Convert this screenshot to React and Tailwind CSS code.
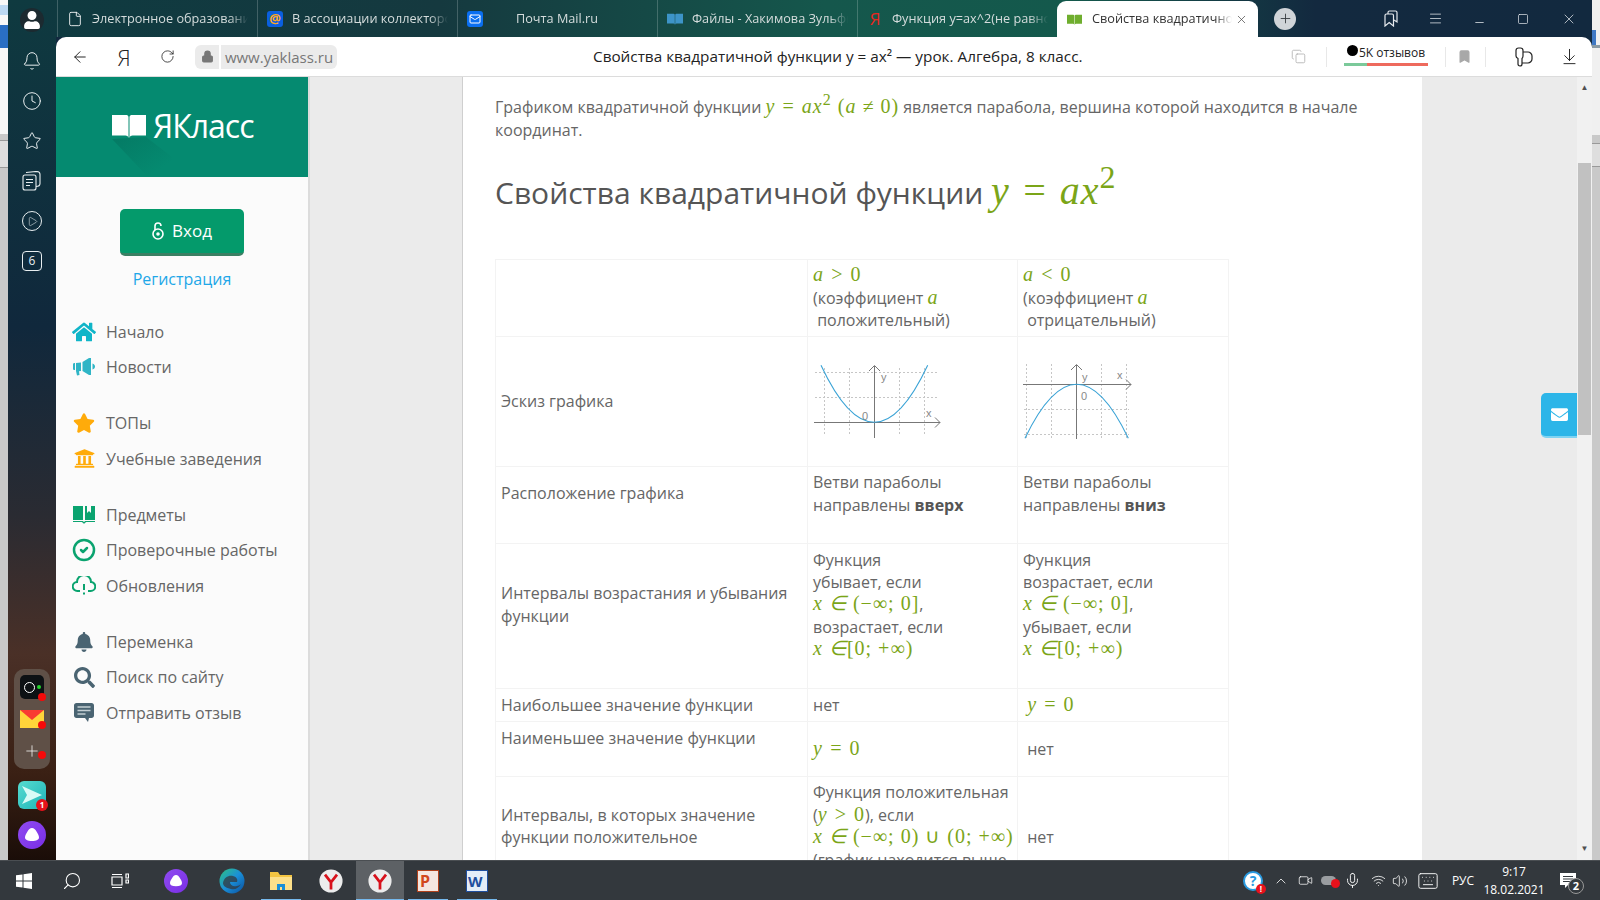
import {
  ArrowLeft, ArrowDownToLine, Bell, ChevronUp, CircleCheck, Clock, File, Mail, Menu, Mic, Minus, Plus, RotateCw,
  Search, Square, Star, Volume2, Wifi, X, Lock, Bookmark, Copy, Video, Keyboard, Play,
} from 'lucide-react';
import { FaHome, FaStar, FaUniversity, FaBell, FaSearch, FaEnvelope, FaUser } from 'react-icons/fa';

const openSans = { fontFamily: '"Open Sans", sans-serif' };

// math pieces
function M({ children, className = 'text-[20px]' }) {
  return <span className={`font-['Liberation_Serif',serif] italic text-[#7ba518] tracking-[1px] leading-none ${className}`}>{children}</span>;
}
function R({ children }) {
  return <span className="not-italic">{children}</span>;
}

function BookLogo({ className, color = '#fff' }) {
  return (
    <svg className={className} viewBox="0 0 34 24" fill={color}>
      <path d="M0 1h14c1.3 0 2.3.6 2.5 2v21c-.5-1.6-1.6-2.400-3-2.400H0z" />
      <path d="M34 1H20c-1.3 0-2.3.6-2.500 2v21c.5-1.6 1.600-2.400 3-2.400H34z" />
    </svg>
  );
}

function Tab({ icon, title, center }) {
  return (
    <div className="w-[200px] h-[37px] flex items-center border-l border-white/20 relative">
      <div className="w-[34px] flex justify-center shrink-0">{icon}</div>
      <div className={`w-[156px] whitespace-nowrap overflow-hidden text-[12.7px] text-[#d4dcdc] [mask-image:linear-gradient(to_right,black_88%,transparent)] ${center ? 'pl-[24px]' : ''}`}>
        {title}
      </div>
    </div>
  );
}

function NavRow({ icon, label }) {
  return (
    <div className="h-[35.5px] flex items-center text-[16px] text-[#666]">
      <div className="w-[50px] flex justify-center pl-[6px] shrink-0">{icon}</div>
      <span>{label}</span>
    </div>
  );
}

function Parabola({ up }) {
  const grid = 'stroke-[#c6c6c6]';
  if (up) {
    return (
      <svg width="130" height="76" className="block">
        <g className={grid} strokeWidth="1" strokeDasharray="2 2">
          <path d="M11.5 5V73M36.5 5V73M86.5 5V73M111.5 5V73M2 9.5H126M2 34.5H126" />
        </g>
        <path d="M1 59.5H127M122 54.5l5 5-5 5M61.5 75V3M56 8l5.500-5.500L67 8" fill="none" stroke="#777" strokeWidth="1" />
        <path d="M8 2.3Q61.3 116.3 114.7 2.3" fill="none" stroke="#3aa3d6" strokeWidth="1.1" />
        <g fill="#888" fontSize="11" fontFamily="Liberation Sans, sans-serif">
          <text x="68" y="18">y</text>
          <text x="113" y="54">x</text>
          <text x="49" y="57">0</text>
        </g>
      </svg>
    );
  }
  return (
    <svg width="112" height="78" className="block">
      <g className={grid} strokeWidth="1" strokeDasharray="2 2">
        <path d="M3.5 2V76M28.5 2V76M78.5 2V76M103.5 2V76M1 47.5H106M1 72.5H106" />
      </g>
      <path d="M0 22.5H108M103 17.5l5 5-5 5M53.5 77V3M48 8l5.500-5.500L59 8" fill="none" stroke="#777" strokeWidth="1" />
      <path d="M2 76.3Q53.7 -31.7 105.3 76.3" fill="none" stroke="#3aa3d6" strokeWidth="1.1" />
      <g fill="#888" fontSize="11" fontFamily="Liberation Sans, sans-serif">
        <text x="59" y="19">y</text>
        <text x="94" y="17">x</text>
        <text x="58" y="38">0</text>
      </g>
    </svg>
  );
}

function YandexBall({ size = 28 }) {
  return (
    <svg width={size} height={size} viewBox="0 0 28 28">
      <circle cx="14" cy="14" r="13.5" fill="#ececec" />
      <path d="M7 6.500l7 9 7-9M14 15.500V24" fill="none" stroke="#d8111b" strokeWidth="3.2" />
    </svg>
  );
}

function Alice({ size = 28 }) {
  return (
    <svg width={size} height={size} viewBox="0 0 28 28">
      <defs>
        <linearGradient id={`al${size}`} x1="0" y1="0" x2="1" y2="1">
          <stop offset="0" stopColor="#8f4bf0" />
          <stop offset="1" stopColor="#7a2ee6" />
        </linearGradient>
      </defs>
      <circle cx="14" cy="14" r="14" fill={`url(#al${size})`} />
      <path d="M14 7c2 0 3.200 1.300 4.500 3.600 1.200 2 2.500 4 2.500 5.900 0 2.300-2.500 3.500-7 3.500s-7-1.200-7-3.500c0-1.900 1.300-3.900 2.500-5.900C10.800 8.300 12 7 14 7z" fill="#fff" />
    </svg>
  );
}

function TaskItem({ children, active, underline, className = '' }) {
  return (
    <div className={`w-[48px] h-[40px] flex items-center justify-center relative ${active ? 'bg-[#5d6165]' : ''} ${className}`}>
      {children}
      {underline && <div className="absolute bottom-0 left-[4px] right-[4px] h-[2px] bg-[#76b9ed]" />}
      {active && <div className="absolute bottom-0 left-0 right-0 h-[2px] bg-[#76b9ed]" />}
    </div>
  );
}

const cell = 'border border-[#f3f3f3] px-[5px] align-middle';

export default function App() {
  return (
    <div className="w-[1600px] h-[900px] flex flex-col overflow-hidden relative bg-[#33383d]" style={openSans}>
      <div className="flex h-[860px]">
        {/* bit of the windows behind */}
        <div className="w-[8px] bg-[#c9c9c9] flex flex-col shrink-0">
          <div className="h-[134px] bg-[#f7f7f7] flex flex-col">
            <div className="h-[5px]" />
            <div className="h-[10px] bg-[#bcd8f2]" />
            <div className="h-[10px]" />
            <div className="h-[23px] bg-[#2a6fc4]" />
          </div>
          <div className="h-[28px] mt-[6px] border-y border-[#999] bg-[#dedede]" />
        </div>

        {/* yandex side panel */}
        <div className="w-[48px] shrink-0 flex flex-col items-center bg-[linear-gradient(180deg,#0f3a40_0%,#10283c_38%,#2a2b32_60%,#4a3027_76%,#3a2014_90%,#1a0d08_100%)] text-white">
          <div className="w-[24px] h-[24px] mt-[8px] rounded-full bg-[#1c2a30] flex items-center justify-center overflow-hidden">
            <FaUser size={18} className="text-white" />
          </div>
          <div className="mt-[19px] flex flex-col items-center gap-[20px] text-[#e8eef0]">
            <Bell size={20} strokeWidth={1.2} />
            <Clock size={20} strokeWidth={1.2} />
            <Star size={20} strokeWidth={1.2} />
            <svg width="20" height="20" viewBox="0 0 20 20" fill="none" stroke="#e8eef0" strokeWidth="1.1">
              <rect x="1" y="4" width="13" height="15" rx="2" />
              <path d="M4 1.500l10-1c2 0 4 1 4 3v9c0 1.500-1 3-4 3M4 8.500h7M4 11.500h7M4 14.500h4" />
            </svg>
            <div className="w-[20px] h-[20px] rounded-full border border-[#e8eef0] flex items-center justify-center">
              <Play size={11} strokeWidth={1.2} className="ml-[1px]" />
            </div>
            <div className="w-[20px] h-[20px] rounded-[4px] border border-[#e8eef0] flex items-center justify-center text-[12px]">6</div>
          </div>
          <div className="mt-auto w-[36px] h-[100px] rounded-[10px] bg-[#5f5047] flex flex-col items-center pt-[6px] mb-[12px]">
            <div className="w-[24px] h-[24px] rounded-[5px] bg-[#0d1114] relative flex items-center justify-center">
              <div className="w-[11px] h-[11px] rounded-full border border-white -ml-[5px]" />
              <div className="absolute w-[4px] h-[4px] rounded-full bg-[#22d52a] right-[3px] top-[10px]" />
              <div className="absolute w-[8px] h-[8px] rounded-full bg-[#f50a0a] -right-[2px] -bottom-[2px]" />
            </div>
            <div className="w-[24px] h-[18px] mt-[11px] relative">
              <svg width="24" height="18" viewBox="0 0 24 18">
                <rect width="24" height="18" fill="#ffd43a" />
                <path d="M0 0h24L12 10z" fill="#f93a32" />
              </svg>
              <div className="absolute w-[8px] h-[8px] rounded-full bg-[#f50a0a] -right-[2px] -bottom-[1px]" />
            </div>
            <div className="relative mt-[14px]">
              <Plus size={18} strokeWidth={1} className="text-white" />
              <div className="absolute w-[8px] h-[8px] rounded-full bg-[#f50a0a] -right-[5px] top-[9px]" />
            </div>
          </div>
          <div className="w-[28px] h-[28px] rounded-[6px] bg-[linear-gradient(135deg,#56dcd0,#1fb4b8)] relative flex items-center justify-center mb-[12px]">
            <svg width="22" height="20" viewBox="0 0 22 20">
              <path d="M1 1l20 9-20 9 5-9z" fill="#d8fbf6" />
            </svg>
            <div className="absolute w-[12px] h-[12px] rounded-full bg-[#e8111b] -right-[2px] -bottom-[2px] text-white text-[8px] font-bold flex items-center justify-center">1</div>
          </div>
          <div className="mb-[11px]"><Alice /></div>
        </div>

        <div className="flex-1 flex flex-col bg-[#12293f] min-w-0">
          {/* tabs */}
          <div className="h-[37px] flex items-center bg-[linear-gradient(90deg,#0f3a40_0%,#15393f_25%,#15574c_50%,#14594c_66%,#13293f_82%,#12293f_100%)]">
            <div className="w-[1px]" />
            <Tab title="Электронное образование" icon={<File size={16} strokeWidth={1.3} className="text-white" />} />
            <Tab title="В ассоциации коллекторов" icon={<div className="w-[16px] h-[16px] rounded-[3px] bg-[#0a5fe0] text-[#ffa81e] text-[13px] font-bold leading-[15px] text-center">@</div>} />
            <Tab center title="Почта Mail.ru" icon={<div className="w-[16px] h-[16px] rounded-[3px] bg-[#0a6ff0] flex items-center justify-center"><Mail size={12} className="text-white" /></div>} />
            <Tab title="Файлы - Хакимова Зульфия" icon={<BookLogo className="w-[16px] h-[14px]" color="#3d94c8" />} />
            <Tab title="Функция y=ax^2(не равно" icon={<span className="text-[#e8271d] text-[17px] leading-none">Я</span>} />
            <div className="w-[201px] h-[36px] mt-[1px] bg-white rounded-t-[9px] flex items-center shrink-0">
              <div className="w-[35px] flex justify-center shrink-0"><BookLogo className="w-[15px] h-[13px]" color="#6fae2e" /></div>
              <div className="w-[140px] whitespace-nowrap overflow-hidden text-[12.7px] text-[#333] [mask-image:linear-gradient(to_right,black_88%,transparent)]">Свойства квадратичной</div>
              <X size={13} strokeWidth={1.3} className="text-[#444] ml-[3px]" />
            </div>
            <div className="w-[22px] h-[22px] rounded-full bg-[#d0d4d8] ml-[16px] flex items-center justify-center">
              <Plus size={15} strokeWidth={1.4} className="text-[#33383d]" />
            </div>
            <div className="flex-1" />
            <div className="flex items-center text-[#e6eaee]">
              <div className="w-[44px] flex justify-center">
                <svg width="14" height="17" viewBox="0 0 14 17" fill="none" stroke="#e6eaee" strokeWidth="1.2">
                  <path d="M1 5.500c0-1 .5-1.500 1.500-1.500H8c1 0 1.500.5 1.500 1.500V16L5.200 12.500 1 16z" />
                  <path d="M4 4V2.500C4 1.500 4.500 1 5.500 1H11.500C12.500 1 13 1.500 13 2.500V12l-3-2" />
                </svg>
              </div>
              <div className="w-[44px] flex justify-center"><Menu size={15} strokeWidth={1.2} /></div>
              <div className="w-[44px] flex justify-center pt-[7px]"><Minus size={13} strokeWidth={1.4} /></div>
              <div className="w-[44px] flex justify-center"><Square size={12} strokeWidth={1.4} /></div>
              <div className="w-[47px] flex justify-center"><X size={16} strokeWidth={1.1} /></div>
            </div>
          </div>

          {/* address bar */}
          <div className="h-[40px] bg-white rounded-t-[10px] border-b border-[#dcdcdc] flex items-center relative shrink-0">
            <div className="w-[48px] flex justify-center"><ArrowLeft size={18} strokeWidth={1.3} className="text-[#222]" /></div>
            <div className="w-[40px] flex justify-center text-[22px] leading-none text-[#222] font-light">Я</div>
            <div className="w-[46px] flex justify-center"><RotateCw size={15} strokeWidth={1.3} className="text-[#222]" /></div>
            <div className="w-[24px] h-[24px] ml-[5px] rounded-l-[6px] bg-[#ebebeb] flex items-center justify-center">
              <Lock size={13} className="text-[#777]" fill="#777" />
            </div>
            <div className="h-[24px] ml-[2px] w-[116px] rounded-r-[6px] bg-[#ebebeb] text-[15px] text-[#777] leading-[24px] text-center">www.yaklass.ru</div>
            <div className="ml-[256px] text-[15.3px] text-[#222] whitespace-nowrap">Свойства квадратичной функции y = ax² — урок. Алгебра, 8 класс.</div>
            <div className="ml-auto flex items-center h-[24px] text-[#a8a8a8]">
              <Copy size={15} strokeWidth={1.2} />
              <div className="w-[1px] h-[20px] bg-[#e8e8e8] ml-[20px]" />
              <div className="w-[84px] ml-[17px] flex flex-col items-center">
                <div className="text-[12px] leading-[16px] text-[#222] whitespace-nowrap flex items-start -mt-[2px]">
                  <span className="w-[11px] h-[11px] rounded-full bg-black inline-block mr-[1px]" />5K отзывов
                </div>
                <div className="flex w-full h-[3px] mt-[2px]">
                  <div className="w-[23px] bg-[#7bc99a]" />
                  <div className="flex-1 bg-[#ee6a5d]" />
                </div>
              </div>
              <div className="w-[1px] h-[20px] bg-[#e8e8e8] ml-[17px]" />
              <Bookmark size={15} fill="#a8a8a8" className="ml-[11px]" />
              <div className="w-[1px] h-[20px] bg-[#e8e8e8] ml-[13px]" />
              <svg width="18" height="20" viewBox="0 0 18 20" className="ml-[29px] mr-[13px]" fill="none" stroke="#222" strokeWidth="1.2">
                <path d="M1 3.500c0-1.500 1-2.500 2.500-2.500h2C7 1 8 2 8 3.500V9c0 1-.5 2-1 2.500V17c0 1-.6 2-2 2s-2-1-2-2v-5.500C2 11 1 10 1 9z" />
                <path d="M8 5h5c2 0 4 2 4 4v3c0 2-2 4-4 4H7" />
              </svg>
              <div className="w-[46px] flex justify-center"><ArrowDownToLine size={19} strokeWidth={1.2} className="text-[#222]" /></div>
            </div>
          </div>

          {/* page */}
          <div className="flex-1 flex min-h-0 bg-[#ebebeb]">
            {/* site menu */}
            <div className="w-[254px] shrink-0 bg-[#fbfbfb] border-r-2 border-[#dcdcdc] flex flex-col">
              <div className="h-[100px] bg-[#058a70] flex items-center relative overflow-hidden">
                <svg className="absolute left-[56px] top-[60px]" width="60" height="40" viewBox="0 0 60 40">
                  <defs>
                    <linearGradient id="logoShade" x1="0" y1="0" x2="1" y2="1">
                      <stop offset="0" stopColor="#047a64" />
                      <stop offset="0.8" stopColor="#058a70" />
                    </linearGradient>
                  </defs>
                  <path d="M0 2L36 40h24V20L34 0z" fill="url(#logoShade)" />
                </svg>
                <BookLogo className="w-[34px] h-[24px] ml-[56px] relative -mt-[2px]" />
                <span className="ml-[7px] text-[32px] text-white tracking-[-1px] relative -mt-[2px]">ЯКласс</span>
              </div>
              <button className="w-[124px] h-[47px] ml-[64px] mt-[32px] rounded-[5px] bg-[#049a6b] border-b-[3px] border-[#3b7f63] text-white text-[17px] flex items-center justify-center gap-[8px]">
                <svg width="12" height="20" viewBox="0 0 12 20" fill="none" stroke="#fff" strokeWidth="1.6">
                  <path d="M3 9V5a3 3 0 0 1 6 0" />
                  <circle cx="6" cy="13" r="5" />
                  <circle cx="6" cy="13" r="1" fill="#fff" />
                </svg>
                Вход
              </button>
              <div className="mt-[11px] h-[24px] leading-[24px] text-center text-[16px] text-[#1ea7e8]">Регистрация</div>

              <div className="mt-[23px]">
                <NavRow label="Начало" icon={<FaHome size={24} className="text-[#10b5c8]" />} />
                <NavRow label="Новости" icon={
                  <svg width="22" height="18" viewBox="0 0 22 18" fill="#2fb5c6">
                    <path d="M0 6.500c0-1 .5-1.500 1.500-1.500H2v7h-.5C.5 12 0 11.500 0 10.500zM3 5l5-.5V13l-2 .3L6.500 17l-2.500.5L3 13zM9.500 4L16 0h2v17h-2L9.500 13zM19.500 5.500c1.500.5 2.500 1.500 2.500 3s-1 2.500-2.500 3z" />
                  </svg>
                } />
              </div>
              <div className="mt-[20.5px]">
                <NavRow label="ТОПы" icon={<FaStar size={22} className="text-[#ffab0a]" />} />
                <NavRow label="Учебные заведения" icon={<FaUniversity size={21} className="text-[#ffab0a]" />} />
              </div>
              <div className="mt-[20.5px]">
                <NavRow label="Предметы" icon={
                  <svg width="22" height="18" viewBox="0 0 22 18" fill="#0aa36f">
                    <path d="M0 0h10v14H0zM12 0h2v7l2-2 2 2V0h4v14H12zM0 15h9c1 0 1.500.5 2 1 .5-.5 1-1 2-1h9v1h-8c-1 0-2 .5-3 2-1-1.500-2-2-3-2H0z" />
                  </svg>
                } />
                <NavRow label="Проверочные работы" icon={<CircleCheck size={24} strokeWidth={2.5} className="text-[#0aa36f]" />} />
                <NavRow label="Обновления" icon={
                  <svg width="24" height="20" viewBox="0 0 24 20" fill="none" stroke="#0aa36f" strokeWidth="2">
                    <path d="M8 15H5.500a4.500 4.500 0 0 1-.5-9 7 7 0 0 1 14 0 4.500 4.500 0 0 1-.5 9H16" />
                    <path d="M12 8v6M12 16.500v2" />
                  </svg>
                } />
              </div>
              <div className="mt-[20.5px]">
                <NavRow label="Переменка" icon={<FaBell size={20} className="text-[#4a6472]" />} />
                <NavRow label="Поиск по сайту" icon={<FaSearch size={21} className="text-[#4a6472]" />} />
                <NavRow label="Отправить отзыв" icon={
                  <svg width="20" height="19" viewBox="0 0 20 19">
                    <path d="M2.500 0h15C19 0 20 1 20 2.500v10c0 1.500-1 2.500-2.500 2.500H15l-1 4-3-4H2.500C1 15 0 14 0 12.500v-10C0 1 1 0 2.500 0z" fill="#4a6472" />
                    <path d="M3.500 4h13M3.500 7.500h13M3.500 11h8" stroke="#c4cfd4" strokeWidth="1.500" />
                  </svg>
                } />
              </div>
            </div>

            <div className="w-[152px] shrink-0" />

            {/* article */}
            <div className="w-[960px] shrink-0 bg-white border-l border-[#cfcfcf] overflow-hidden pl-[32px] text-[16px] leading-[22.4px] text-[#666]">
              <p className="mt-[19px] w-[880px] leading-[23.4px]">
                Графиком квадратичной функции <M>y = ax<sup className="not-italic text-[16px]">2</sup> <R>(</R>a ≠ <R>0)</R></M> является парабола, вершина которой находится в начале координат.
              </p>
              <h2 className="mt-[28px] h-[40px] text-[30px] leading-[40px] text-[#555] whitespace-nowrap">
                Свойства квадратичной функции <M className="text-[40px]">y = ax<sup className="not-italic text-[32px]">2</sup></M>
              </h2>
              <table className="mt-[48px] border-collapse table-fixed w-[734px]">
                <tbody>
                  <tr className="h-[77px]">
                    <td className={`${cell} w-[312px]`} />
                    <td className={`${cell} w-[210px]`}>
                      <M>a &gt; <R>0</R></M><br />(коэффициент <M>a</M><br />&nbsp;положительный)
                    </td>
                    <td className={cell}>
                      <M>a &lt; <R>0</R></M><br />(коэффициент <M>a</M><br />&nbsp;отрицательный)
                    </td>
                  </tr>
                  <tr className="h-[130px]">
                    <td className={cell}>Эскиз графика</td>
                    <td className={cell}><Parabola up /></td>
                    <td className={cell}><Parabola /></td>
                  </tr>
                  <tr className="h-[77px]">
                    <td className={cell}>Расположение графика<br /><br /></td>
                    <td className={cell}>Ветви параболы<br />направлены <b className="text-[#555]">вверх</b><br /><br /></td>
                    <td className={cell}>Ветви параболы<br />направлены <b className="text-[#555]">вниз</b><br /><br /></td>
                  </tr>
                  <tr className="h-[145px]">
                    <td className={cell}>Интервалы возрастания и убывания функции<br /><br /></td>
                    <td className={cell}>
                      Функция<br />убывает, если<br /><M>x ∈ <R>(−∞; 0]</R></M>,<br />возрастает, если<br /><M>x ∈<R>[0; +∞)</R></M><br /><br />
                    </td>
                    <td className={cell}>
                      Функция<br />возрастает, если<br /><M>x ∈ <R>(−∞; 0]</R></M>,<br />убывает, если<br /><M>x ∈<R>[0; +∞)</R></M><br /><br />
                    </td>
                  </tr>
                  <tr className="h-[33px]">
                    <td className={cell}>Наибольшее значение функции</td>
                    <td className={cell}>нет</td>
                    <td className={cell}>&nbsp;<M>y = <R>0</R></M></td>
                  </tr>
                  <tr className="h-[55px]">
                    <td className={`${cell} !align-top pt-[5px]`}>Наименьшее значение функции</td>
                    <td className={cell}><M>y = <R>0</R></M></td>
                    <td className={cell}>&nbsp;нет</td>
                  </tr>
                  <tr className="h-[122px]">
                    <td className={cell}>Интервалы, в которых значение функции положительное<br /><br /></td>
                    <td className={cell}>
                      Функция положительная<br />(<M>y &gt; <R>0</R></M>), если<br />
                      <span className="whitespace-nowrap"><M>x ∈ <R>(−∞; 0) ∪ (0; +∞)</R></M></span><br />
                      (график находится выше<br />оси <M>x</M>)
                    </td>
                    <td className={cell}>&nbsp;нет</td>
                  </tr>
                </tbody>
              </table>
            </div>

            <div className="flex-1 relative">
              {/* feedback button */}
              <div className="absolute right-0 top-[316px] w-[36px] h-[45px] bg-[#2cb5e8] rounded-l-[5px] border-b-2 border-[#7fd3f2] flex items-center justify-center">
                <FaEnvelope size={17} className="text-white" />
              </div>
            </div>

            {/* scrollbar */}
            <div className="w-[15px] shrink-0 bg-[#f1f1f1] flex flex-col items-center text-[#505050] text-[8px] leading-none">
              <div className="h-[16px] pt-[6px]">▲</div>
              <div className="w-[13px] h-[272px] mt-[70px] bg-[#c1c1c1]" />
              <div className="mt-auto h-[16px] pb-[5px]">▼</div>
            </div>
          </div>
        </div>

        <div className="w-[8px] bg-[#c9c9c9] shrink-0 flex flex-col">
          <div className="h-[135px] bg-[#f0f0f0] flex flex-col">
            <div className="h-[30px]" />
            <div className="h-[15px] bg-[#3f78c4] w-[4px]" />
            <div className="h-[3px] bg-[#8a9aa5]" />
          </div>
          <div className="h-[24px] mt-[8px] border-y border-[#999] bg-[#dedede]" />
        </div>
      </div>

      {/* windows taskbar */}
      <div className="h-[40px] flex items-center bg-[#33383d] text-white border-t border-[#4a4e52]">
        <TaskItem>
          <svg width="16" height="16" viewBox="0 0 16 16" fill="#fff">
            <path d="M0 2.300L6.500 1.400V7.500H0zM7.500 1.200L16 0V7.500H7.500zM0 8.500H6.500V14.600L0 13.700zM7.500 8.500H16V16L7.500 14.800z" />
          </svg>
        </TaskItem>
        <TaskItem><Search size={20} strokeWidth={1.3} className="-scale-x-100" /></TaskItem>
        <TaskItem>
          <svg width="18" height="16" viewBox="0 0 18 16" fill="none" stroke="#fff" strokeWidth="1.2">
            <path d="M1 4h10v8H1zM1 1.500h10M1 14.500h10M15 1v4h2.500V1zM15 7v3h2.500V7z" />
          </svg>
        </TaskItem>
        <TaskItem className="ml-[8px]"><Alice size={24} /></TaskItem>
        <TaskItem className="ml-[8px]">
          <svg width="26" height="26" viewBox="0 0 26 26">
            <defs>
              <linearGradient id="edge" x1="0" y1="0" x2="1" y2="1">
                <stop offset="0" stopColor="#2fc37f" />
                <stop offset="0.5" stopColor="#1a8fd8" />
                <stop offset="1" stopColor="#0b4f9e" />
              </linearGradient>
            </defs>
            <circle cx="13" cy="13" r="12.500" fill="url(#edge)" />
            <path d="M4 15c1-6 6-8 10-7 4 1 5 4 4 6h-7c0 3 3 5 7 4 1 0 3-1 4-2-2 4-6 6-10 5-5-1-8-3-8-6z" fill="#33383d" opacity="0.75" />
          </svg>
        </TaskItem>
        <TaskItem underline className="ml-[1px]">
          <svg width="22" height="20" viewBox="0 0 22 20">
            <path d="M0 1h8l2 3h12v15H0z" fill="#f4c542" />
            <path d="M0 6h22v13H0z" fill="#fde08a" />
            <path d="M7 13h8v6h-3v-3h-2v3H7z" fill="#1a8fd8" />
          </svg>
        </TaskItem>
        <TaskItem className="ml-[2px]"><YandexBall size={24} /></TaskItem>
        <TaskItem active className="ml-[1px]"><YandexBall size={24} /></TaskItem>
        <TaskItem underline>
          <div className="w-[22px] h-[22px] bg-[#f5e6df] border border-[#b0411c] text-[#d2471c] text-[16px] font-bold leading-[20px] pl-[2px]">P</div>
        </TaskItem>
        <TaskItem underline className="ml-[1px]">
          <div className="w-[22px] h-[22px] bg-[#e4edf8] border border-[#1f4e9e] text-[#1f4e9e] text-[15px] font-bold leading-[20px] pl-[1px]">W</div>
        </TaskItem>

        <div className="ml-auto flex items-center pr-[15px]">
          <div className="w-[28px] flex justify-center relative">
            <div className="w-[20px] h-[20px] rounded-full bg-white border-2 border-[#2a9ae0] text-[#2a9ae0] text-[14px] font-bold leading-[16px] text-center">?</div>
            <div className="absolute right-[1px] bottom-[-3px] w-[10px] h-[10px] rounded-full bg-[#e8111b] text-[8px] font-bold leading-[10px] text-center">!</div>
          </div>
          <div className="w-[28px] flex justify-center"><ChevronUp size={16} strokeWidth={1.2} /></div>
          <div className="w-[20px] flex justify-center"><Video size={15} strokeWidth={1.2} /></div>
          <div className="w-[26px] flex justify-center relative">
            <div className="w-[15px] h-[9px] rounded-full bg-[#9a9da0]" />
            <div className="absolute right-[1px] -bottom-[3px] w-[9px] h-[9px] rounded-full bg-[#e8111b]" />
          </div>
          <div className="w-[22px] flex justify-center"><Mic size={17} strokeWidth={1.3} /></div>
          <div className="w-[30px] flex justify-center"><Wifi size={15} strokeWidth={1.3} /></div>
          <div className="w-[14px] flex justify-center"><Volume2 size={16} strokeWidth={1.2} className="shrink-0" /></div>
          <div className="w-[42px] flex justify-center"><Keyboard size={22} strokeWidth={1} /></div>
          <div className="w-[28px] text-center text-[12px]">РУС</div>
          <div className="w-[74px] text-center text-[12px] leading-[18px]">9:17<br />18.02.2021</div>
          <div className="w-[34px] flex justify-center relative">
            <svg width="16" height="16" viewBox="0 0 16 16">
              <path d="M0 0h16v12H8l-3 3v-3H0z" fill="#fff" />
              <path d="M3 3.500h10M3 6h10M3 8.500h7" stroke="#33383d" />
            </svg>
            <div className="absolute right-[1px] -bottom-[5px] w-[16px] h-[16px] rounded-full bg-[#33383d] border border-[#999] text-[11px] font-bold leading-[14px] text-center">2</div>
          </div>
        </div>
      </div>
    </div>
  );
}
